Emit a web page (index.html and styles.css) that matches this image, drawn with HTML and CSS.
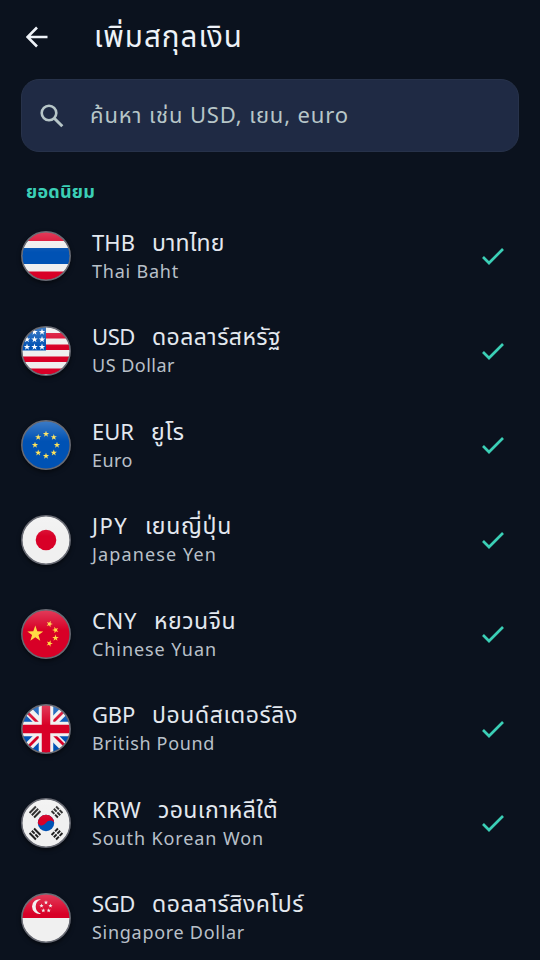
FILE: index.html
```
<!DOCTYPE html>
<html lang="th">
<head>
<meta charset="utf-8">
<meta name="viewport" content="width=device-width, initial-scale=1">
<title>เพิ่มสกุลเงิน</title>
<link rel="stylesheet" href="styles.css">
</head>
<body>
<svg class="defs" width="0" height="0" aria-hidden="true">
  <defs>
    <clipPath id="disc"><circle cx="25" cy="25" r="24"/></clipPath>
    <linearGradient id="gloss" x1="0" y1="0" x2="0" y2="1">
      <stop offset="0" stop-color="#fff" stop-opacity=".24"/>
      <stop offset=".42" stop-color="#fff" stop-opacity="0"/>
    </linearGradient>
    <path id="star" d="M0-1 .24-.32 .95-.31 .38 .12 .59 .81 0 .4-.59 .81-.38 .12-.95-.31-.24-.32Z"/>
    <symbol id="check" viewBox="0 0 24 18"><path d="M2 10 8 16 22 2" fill="none" stroke="#3bcfb6" stroke-width="2.7"/></symbol>
    <g id="rim"><circle cx="25" cy="25" r="24.2" fill="url(#gloss)" stroke="#696b74" stroke-width="1.5"/></g>
  </defs>
</svg>
<main class="screen">
  <header class="topbar">
    <svg class="back" viewBox="0 0 22 22"><path d="M21.500 11H2M11 1.500 1.500 11 11 20.500" fill="none" stroke="#eef2f8" stroke-width="2.600"/></svg>
    <h1 class="title" data-width="149">เพิ่มสกุลเงิน</h1>
  </header>
  <div class="search">
    <svg class="lens" viewBox="0 0 24 24"><circle cx="9" cy="9" r="7.300" fill="none" stroke="#b7c6c8" stroke-width="2.600"/><path d="m14 14 8.300 8.300" stroke="#b7c6c8" stroke-width="3"/></svg>
    <span class="hint" data-width="259">ค้นหา เช่น USD, เยน, euro</span>
  </div>
  <h2 class="section" data-width="69">ยอดนิยม</h2>
  <ul class="list">
    <li class="row">
      <svg class="flag" viewBox="0 0 50 50"><g clip-path="url(#disc)"><path fill="#efefef" d="M0 0h50v50H0z"/><path fill="#d80027" d="M0 0h50v10H0zM0 40.500h50V50H0z"/><path fill="#0052b4" d="M0 17h50v16H0z"/></g><use href="#rim"/></svg>
      <div class="text"><div class="name"><span data-width="43">THB</span><span class="thai" data-width="72.5">บาทไทย</span></div><div class="sub" data-width="87">Thai Baht</div></div>
      <svg class="check"><use href="#check"/></svg>
    </li>
    <li class="row">
      <svg class="flag" viewBox="0 0 50 50"><g clip-path="url(#disc)"><path fill="#efefef" d="M0 0h50v50H0z"/><path fill="#d80027" d="M0 7h50v5.500H0zM0 18.500h50v5.500H0zM0 30.500h50v5.500H0zM0 42.500h50v5.500H0z"/><path fill="#0052b4" d="M0 0h25v24.500H0z"/><g fill="#fff"><use href="#star" transform="translate(13.500 6) scale(3.400)"/><use href="#star" transform="translate(21 6) scale(3.400)"/><use href="#star" transform="translate(6 13.500) scale(3.400)"/><use href="#star" transform="translate(13.500 13.500) scale(3.400)"/><use href="#star" transform="translate(21 13.500) scale(3.400)"/><use href="#star" transform="translate(6 21) scale(3.400)"/><use href="#star" transform="translate(13.500 21) scale(3.400)"/><use href="#star" transform="translate(21 21) scale(3.400)"/></g></g><use href="#rim"/></svg>
      <div class="text"><div class="name"><span data-width="43">USD</span><span class="thai" data-width="129">ดอลลาร์สหรัฐ</span></div><div class="sub" data-width="83">US Dollar</div></div>
      <svg class="check"><use href="#check"/></svg>
    </li>
    <li class="row">
      <svg class="flag" viewBox="0 0 50 50"><g clip-path="url(#disc)"><path fill="#0052b4" d="M0 0h50v50H0z"/><g fill="#ffe35a"><use href="#star" transform="translate(25 14) scale(3.300)"/><use href="#star" transform="translate(32.800 17.200) scale(3.300)"/><use href="#star" transform="translate(36 25) scale(3.300)"/><use href="#star" transform="translate(32.800 32.800) scale(3.300)"/><use href="#star" transform="translate(25 36) scale(3.300)"/><use href="#star" transform="translate(17.200 32.800) scale(3.300)"/><use href="#star" transform="translate(14 25) scale(3.300)"/><use href="#star" transform="translate(17.200 17.200) scale(3.300)"/></g></g><use href="#rim"/></svg>
      <div class="text"><div class="name"><span data-width="42">EUR</span><span class="thai" data-width="33.5">ยูโร</span></div><div class="sub" data-width="41">Euro</div></div>
      <svg class="check"><use href="#check"/></svg>
    </li>
    <li class="row">
      <svg class="flag" viewBox="0 0 50 50"><g clip-path="url(#disc)"><path fill="#f0f0f0" d="M0 0h50v50H0z"/><circle cx="25" cy="25" r="10.300" fill="#d80027"/></g><use href="#rim"/></svg>
      <div class="text"><div class="name"><span data-width="36">JPY</span><span class="thai" data-width="87">เยนญี่ปุ่น</span></div><div class="sub" data-width="125">Japanese Yen</div></div>
      <svg class="check"><use href="#check"/></svg>
    </li>
    <li class="row">
      <svg class="flag" viewBox="0 0 50 50"><g clip-path="url(#disc)"><path fill="#d80027" d="M0 0h50v50H0z"/><g fill="#ffda44"><use href="#star" transform="translate(14.300 25) scale(8.400)"/><use href="#star" transform="translate(28.500 15) rotate(20) scale(3.400)"/><use href="#star" transform="translate(34.500 21) rotate(-20) scale(3.400)"/><use href="#star" transform="translate(34.500 29) scale(3.400)"/><use href="#star" transform="translate(28.500 34.500) rotate(20) scale(3.400)"/></g></g><use href="#rim"/></svg>
      <div class="text"><div class="name"><span data-width="45">CNY</span><span class="thai" data-width="82">หยวนจีน</span></div><div class="sub" data-width="125">Chinese Yuan</div></div>
      <svg class="check"><use href="#check"/></svg>
    </li>
    <li class="row">
      <svg class="flag" viewBox="0 0 50 50"><g clip-path="url(#disc)"><path fill="#0052b4" d="M0 0h50v50H0z"/><path d="M0 0 50 50M50 0 0 50" stroke="#f0f0f0" stroke-width="9"/><path d="M3 5 20 22M47 3 30 20M20 30 3 47M30 28 47 45" stroke="#d80027" stroke-width="2.800"/><path d="M25 0v50M0 25h50" stroke="#f0f0f0" stroke-width="14.500"/><path d="M25 0v50M0 25h50" stroke="#d80027" stroke-width="8.500"/></g><use href="#rim"/></svg>
      <div class="text"><div class="name"><span data-width="43">GBP</span><span class="thai" data-width="146">ปอนด์สเตอร์ลิง</span></div><div class="sub" data-width="123">British Pound</div></div>
      <svg class="check"><use href="#check"/></svg>
    </li>
    <li class="row">
      <svg class="flag" viewBox="0 0 50 50"><g clip-path="url(#disc)"><path fill="#f0f0f0" d="M0 0h50v50H0z"/><circle cx="25" cy="25" r="8.200" fill="#0052b4"/><path d="M16.800 25a8.200 8.200 0 0 1 16.400 0c-1-3-5.500-3.500-8.200 0s-7.200 3-8.200 0Z" fill="#d80027"/><g fill="none" stroke="#202020" stroke-width="2"><path transform="translate(14 14) rotate(-45)" d="M-4.500-3.200h9M-4.500 0h9M-4.500 3.200h9"/><path transform="translate(36 14) rotate(45)" d="M-4.500-3.200h4M.5-3.200h4M-4.500 0h4M.5 0h4M-4.500 3.200h4M.5 3.200h4"/><path transform="translate(14 36) rotate(45)" d="M-4.500-3.200h9M-4.500 0h4M.5 0h4M-4.500 3.200h9"/><path transform="translate(36 36) rotate(-45)" d="M-4.500-3.200h4M.5-3.200h4M-4.500 0h4M.5 0h4M-4.500 3.200h4M.5 3.200h4"/></g></g><use href="#rim"/></svg>
      <div class="text"><div class="name"><span data-width="49">KRW</span><span class="thai" data-width="120">วอนเกาหลีใต้</span></div><div class="sub" data-width="172">South Korean Won</div></div>
      <svg class="check"><use href="#check"/></svg>
    </li>
    <li class="row">
      <svg class="flag" viewBox="0 0 50 50"><g clip-path="url(#disc)"><path fill="#f0f0f0" d="M0 0h50v50H0z"/><path fill="#d80027" d="M0 0h50v25H0z"/><g fill="#f0f0f0"><path d="M20 6.500a7.300 7.300 0 1 0 0 14.200 7.400 7.400 0 0 1 0-14.200Z"/><use href="#star" transform="translate(25 9.500) scale(2.200)"/><use href="#star" transform="translate(20.500 12.800) scale(2.200)"/><use href="#star" transform="translate(29.500 12.800) scale(2.200)"/><use href="#star" transform="translate(22.300 17.500) scale(2.200)"/><use href="#star" transform="translate(27.700 17.500) scale(2.200)"/></g></g><use href="#rim"/></svg>
      <div class="text"><div class="name"><span data-width="43">SGD</span><span class="thai" data-width="152">ดอลลาร์สิงคโปร์</span></div><div class="sub" data-width="153">Singapore Dollar</div></div>
    </li>
  </ul>
</main>
<script src="fit.js"></script>
</body>
</html>
```
FILE: styles.css
```
* { box-sizing: border-box; }
body {
  margin: 0;
  background: #0b121e;
  color: #e3e8ef;
  font-family: "Noto Sans", "Noto Sans Thai", sans-serif;
}
.defs { display: block; height: 0; }
.screen { width: 540px; height: 960px; overflow: hidden; }
.topbar { display: flex; align-items: center; height: 79px; padding: 0 26px 6px; }
.back { width: 22px; height: 22px; flex: none; }
.title { margin: -2px 0 0 46px; font-size: 29.5px; line-height: 40px; font-weight: 400; white-space: nowrap; color: #eef2f8; }
.search {
  display: flex; align-items: center;
  height: 73px; margin: 0 21px; padding: 0 18px;
  border: 1px solid #27324a; border-radius: 18px; background: #1f2a44;
}
.lens { width: 24px; height: 24px; flex: none; }
.hint { margin: -4px 0 0 26px; font-size: 22px; line-height: 30px; white-space: pre; color: #b7c6c8; }
.section { margin: 26px 0 0 26px; height: 31px; font-size: 18px; line-height: 26px; font-weight: 700; white-space: nowrap; color: #3bcfb6; }
.list { margin: 0; padding: 0; list-style: none; }
.row { display: flex; align-items: center; height: 94.5px; padding: 0 35px 0 21px; }
.flag { width: 50px; height: 50px; flex: none; overflow: visible; border-radius: 50%; box-shadow: 0 2px 4px #0008; }
.text { flex: 1; margin-left: 21px; }
.name { display: flex; align-items: baseline; gap: 17px; height: 29px; font-size: 22px; line-height: 28px; white-space: nowrap; }
.thai { font-size: 23px; }
.sub { font-size: 18px; line-height: 28px; white-space: nowrap; color: #b9c0c9; }
.check { width: 24px; height: 18px; flex: none; }
```
FILE: fit.js
```
// Tracks each label out to its design width, one step per visible character.
const segmenter = new Intl.Segmenter("th", { granularity: "grapheme" });
for (const el of document.querySelectorAll("[data-width]")) {
  const range = document.createRange();
  range.selectNodeContents(el);
  const natural = range.getBoundingClientRect().width;
  const count = [...segmenter.segment(el.textContent)].length;
  el.style.letterSpacing = (el.dataset.width - natural) / count + "px";
}
```
